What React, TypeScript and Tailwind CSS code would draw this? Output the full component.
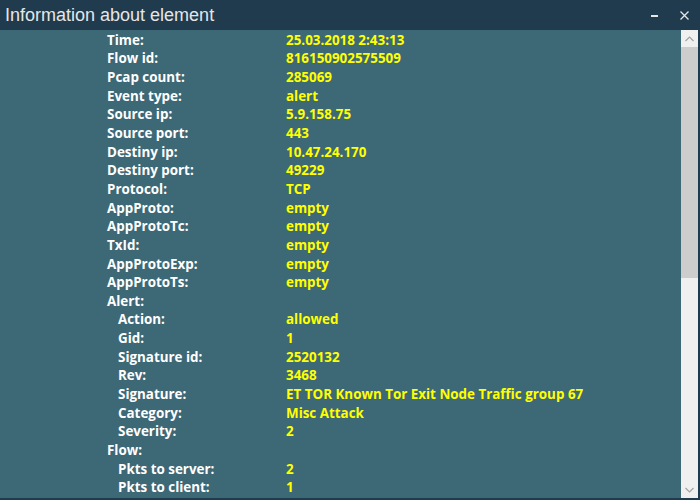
import React from "react";

type Row = { label: string; value?: string; indent?: boolean };

const rows: Row[] = [
  { label: "Time:", value: "25.03.2018 2:43:13" },
  { label: "Flow id:", value: "816150902575509" },
  { label: "Pcap count:", value: "285069" },
  { label: "Event type:", value: "alert" },
  { label: "Source ip:", value: "5.9.158.75" },
  { label: "Source port:", value: "443" },
  { label: "Destiny ip:", value: "10.47.24.170" },
  { label: "Destiny port:", value: "49229" },
  { label: "Protocol:", value: "TCP" },
  { label: "AppProto:", value: "empty" },
  { label: "AppProtoTc:", value: "empty" },
  { label: "TxId:", value: "empty" },
  { label: "AppProtoExp:", value: "empty" },
  { label: "AppProtoTs:", value: "empty" },
  { label: "Alert:" },
  { label: "Action:", value: "allowed", indent: true },
  { label: "Gid:", value: "1", indent: true },
  { label: "Signature id:", value: "2520132", indent: true },
  { label: "Rev:", value: "3468", indent: true },
  { label: "Signature:", value: "ET TOR Known Tor Exit Node Traffic group 67", indent: true },
  { label: "Category:", value: "Misc Attack", indent: true },
  { label: "Severity:", value: "2", indent: true },
  { label: "Flow:" },
  { label: "Pkts to server:", value: "2", indent: true },
  { label: "Pkts to client:", value: "1", indent: true },
];

export default function App() {
  return (
    <div className="w-[700px] h-[500px] flex flex-col bg-[#1f3b4d] overflow-hidden">
      <div className="h-[30px] flex items-center shrink-0">
        <div
          className="flex-1 pl-[5px] text-[18px] text-[#e6e6e6] leading-none"
          style={{ fontFamily: '"Liberation Sans", Arial, sans-serif' }}
        >
          Information about element
        </div>
        <div className="w-[30px] flex justify-center items-center h-full ml-[2px]">
          <div className="w-[7px] h-[2px] bg-[#e6e6e6] mt-[1px]" />
        </div>
        <div className="w-[30px] flex justify-center items-center h-full mr-[1px]">
          <svg width="9" height="9" viewBox="0 0 9 9">
            <path d="M0.5 0.5 L8.5 8.5 M8.5 0.5 L0.5 8.5" stroke="#e6e6e6" strokeWidth="1.3" />
          </svg>
        </div>
      </div>
      <div className="flex-1 flex min-h-0 pr-[2px] pb-[2px]">
        <div
          className="flex-1 bg-[#3d6876] pl-[107px] pt-[1px]"
          style={{ fontFamily: '"Open Sans", "Noto Sans", sans-serif' }}
        >
          {rows.map((r, i) => (
            <div key={i} className="flex h-[18.67px] items-center text-[13.4px] font-bold leading-none">
              <div className={`w-[179px] shrink-0 text-white ${r.indent ? "pl-[11px]" : ""}`}>{r.label}</div>
              {r.value !== undefined && <div className="text-[#ffff00]">{r.value}</div>}
            </div>
          ))}
        </div>
        <div className="w-[17px] bg-[#f0f0f0] flex flex-col">
          <div className="h-[17px] flex items-center justify-center">
            <svg width="9" height="6" viewBox="0 0 9 6">
              <path d="M0.5 5 L4.5 1 L8.5 5" stroke="#a3a3a3" strokeWidth="1.2" fill="none" />
            </svg>
          </div>
          <div className="h-[231px] bg-[#cdcdcd]" />
          <div className="flex-1" />
          <div className="h-[17px] flex items-center justify-center">
            <svg width="9" height="6" viewBox="0 0 9 6">
              <path d="M0.5 1 L4.5 5 L8.5 1" stroke="#a3a3a3" strokeWidth="1.2" fill="none" />
            </svg>
          </div>
        </div>
      </div>
    </div>
  );
}
